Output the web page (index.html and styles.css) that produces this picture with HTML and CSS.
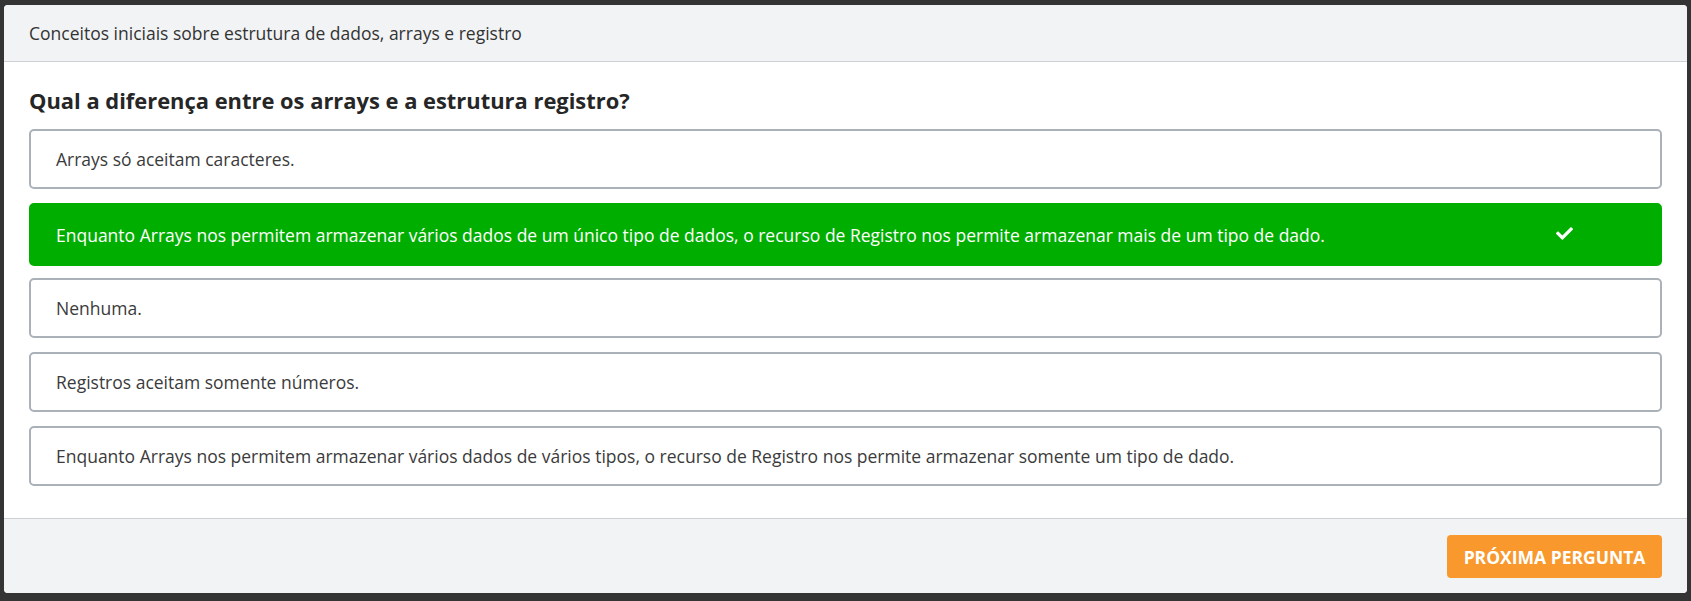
FILE: index.html
```html
<!DOCTYPE html>
<html lang="pt-BR">
<head>
<meta charset="utf-8">
<title>Quiz</title>
<link rel="stylesheet" href="styles.css">
</head>
<body>
<div class="card">
  <div class="card-header">Conceitos iniciais sobre estrutura de dados, arrays e registro</div>
  <div class="card-body">
    <h2 class="question">Qual a diferença entre os arrays e a estrutura registro?</h2>
    <ul class="options">
      <li class="option">Arrays só aceitam caracteres.</li>
      <li class="option correct">
        <span class="option-text">Enquanto Arrays nos permitem armazenar vários dados de um único tipo de dados, o recurso de Registro nos permite armazenar mais de um tipo de dado.</span>
        <span class="option-icon">
          <svg viewBox="0 0 512 512" width="17" height="17"><path fill="#fff" d="M173.898 439.404l-166.4-166.4c-9.997-9.997-9.997-26.206 0-36.204l36.203-36.204c9.997-9.998 26.207-9.998 36.204 0L192 312.69 432.095 72.596c9.997-9.997 26.207-9.997 36.204 0l36.203 36.204c9.997 9.997 9.997 26.206 0 36.204l-294.4 294.401c-9.998 9.997-26.207 9.997-36.204-.001z"/></svg>
        </span>
      </li>
      <li class="option">Nenhuma.</li>
      <li class="option">Registros aceitam somente números.</li>
      <li class="option">Enquanto Arrays nos permitem armazenar vários dados de vários tipos, o recurso de Registro nos permite armazenar somente um tipo de dado.</li>
    </ul>
  </div>
  <div class="card-footer">
    <button class="btn-next">PRÓXIMA PERGUNTA</button>
  </div>
</div>
</body>
</html>
```
FILE: styles.css
```css
* { box-sizing: border-box; }
html, body { margin: 0; padding: 0; }
body {
  background: #343434;
  font-family: "Open Sans", "Noto Sans", sans-serif;
  padding: 5px 4px 8px 4px;
  height: 601px;
}
.card {
  background: #fff;
  border-radius: 4px;
  overflow: hidden;
  height: 588px;
  display: flex;
  flex-direction: column;
}
.card-header {
  background: #f2f3f5;
  border-bottom: 1px solid #cdd1d6;
  height: 57px;
  padding: 0 25px;
  display: flex;
  align-items: center;
  font-size: 17.5px;
  color: #333;
}
.card-body {
  flex: 1;
  padding: 24px 25px 0 25px;
}
.question {
  margin: 0 0 13px 0;
  font-size: 21.9px;
  font-weight: 700;
  color: #262626;
  line-height: 30px;
}
.options {
  list-style: none;
  margin: 0;
  padding: 0;
  display: flex;
  flex-direction: column;
  gap: 14px;
}
.option {
  border: 2px solid #aab1b9;
  border-radius: 5px;
  height: 60px;
  padding: 0 25px;
  display: flex;
  align-items: center;
  font-size: 17.5px;
  color: #3b3b3b;
}
.option.correct {
  background: #00ae00;
  border-color: #00ae00;
  color: #fff;
  height: 63px;
  margin-bottom: -2px;
}
.option-text { flex: 1; }
.option-icon {
  width: 79px;
  display: flex;
  align-items: center;
  margin-top: -2px;
}
.card-footer {
  background: #f2f3f5;
  border-top: 1px solid #cdd1d6;
  height: 75px;
  display: flex;
  align-items: center;
  justify-content: flex-end;
  padding: 0 25px;
}
.btn-next {
  background: #f9982d;
  border: none;
  border-radius: 4px;
  color: #fff;
  font-family: "Open Sans", "Noto Sans", sans-serif;
  font-weight: 700;
  font-size: 17.5px;
  width: 215px;
  height: 43px;
  margin-top: 1px;
}
```
